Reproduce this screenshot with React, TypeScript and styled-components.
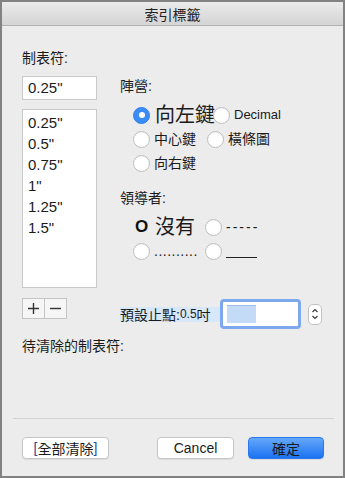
import styled, { createGlobalStyle } from "styled-components";

const Global = createGlobalStyle`
  html, body {
    margin: 0;
    padding: 0;
    background: #ececec;
  }
  * {
    box-sizing: border-box;
  }
`;

const Window = styled.div`
  width: 345px;
  height: 478px;
  border: 2px solid #828282;
  background: #ececec;
  display: flex;
  flex-direction: column;
  font-family: "Liberation Sans", "Noto Sans CJK TC", sans-serif;
  color: #1b1b1b;
`;

const TitleBar = styled.div`
  height: 24px;
  flex-shrink: 0;
  background: linear-gradient(#ebebeb, #d4d4d4);
  border-bottom: 1px solid #b3b3b3;
  display: flex;
  align-items: center;
  justify-content: center;
  font-size: 14px;
  color: #222;
`;

const Content = styled.div`
  flex: 1;
  padding: 0 20px;
  display: flex;
  flex-direction: column;
`;

const Label = styled.div<{ $top?: number }>`
  font-size: 14px;
  line-height: 18px;
  height: 18px;
  margin-top: ${(p) => p.$top ?? 0}px;
  white-space: nowrap;
`;

const Columns = styled.div`
  display: flex;
  gap: 23px;
  margin-top: 9px;
`;

const LeftCol = styled.div`
  width: 75px;
  display: flex;
  flex-direction: column;
`;

const RightCol = styled.div`
  flex: 1;
  display: flex;
  flex-direction: column;
  padding-top: 1px;
`;

const TextBox = styled.div`
  height: 24px;
  background: #fff;
  border: 1px solid #c9c9c9;
  font-size: 15px;
  line-height: 22px;
  padding-left: 5px;
`;

const List = styled.div`
  margin-top: 9px;
  height: 179px;
  background: #fff;
  border: 1px solid #c9c9c9;
  padding: 2px 0 0 5px;
`;

const ListItem = styled.div`
  font-size: 15px;
  line-height: 21px;
  height: 21px;
`;

const PlusMinus = styled.div`
  margin-top: 10px;
  display: flex;
  width: 45px;
  height: 21px;
  border: 1px solid #c4c4c4;
  background: #f6f6f6;
`;

const PmButton = styled.div<{ $divider?: boolean }>`
  flex: 1;
  display: flex;
  align-items: center;
  justify-content: center;
  border-left: ${(p) => (p.$divider ? "1px solid #c4c4c4" : "none")};
`;

const RadioRow = styled.div<{ $top?: number }>`
  display: flex;
  align-items: center;
  height: 24px;
  padding-left: 13px;
  margin-top: ${(p) => p.$top ?? 0}px;
`;

const Option = styled.div<{ $width?: number }>`
  display: flex;
  align-items: center;
  width: ${(p) => (p.$width ? `${p.$width}px` : "auto")};
  flex-shrink: 0;
  white-space: nowrap;
`;

const Radio = styled.span<{ $checked?: boolean }>`
  width: 17px;
  height: 17px;
  border-radius: 50%;
  flex-shrink: 0;
  display: flex;
  align-items: center;
  justify-content: center;
  background: ${(p) => (p.$checked ? "#3a8cf6" : "#fff")};
  border: 1px solid ${(p) => (p.$checked ? "#2f7fec" : "#bdbdbd")};
  box-shadow: ${(p) => (p.$checked ? "none" : "inset 0 1px 1px rgba(0,0,0,0.05)")};
  &::after {
    content: "";
    display: ${(p) => (p.$checked ? "block" : "none")};
    width: 6px;
    height: 6px;
    border-radius: 50%;
    background: #fff;
  }
`;

const OptText = styled.span<{ $size?: number; $spacing?: number }>`
  font-size: ${(p) => p.$size ?? 14}px;
  margin-left: ${(p) => ((p.$size ?? 14) > 16 ? 5 : 4)}px;
  letter-spacing: ${(p) => p.$spacing ?? 0}px;
  line-height: 24px;
`;

const BoldO = styled.span`
  width: 17px;
  display: inline-flex;
  justify-content: center;
  font-size: 17px;
  font-weight: bold;
  line-height: 24px;
  color: #111;
`;

const Underline = styled.span`
  display: inline-block;
  width: 31px;
  height: 14px;
  margin-left: 4px;
  border-bottom: 1px solid #222;
`;

const DefaultRow = styled.div`
  margin-top: 36px;
  height: 30px;
  display: flex;
  align-items: center;
`;

const Highlight = styled.span`
  background: #d7e8fb;
  height: 15px;
  width: 103px;
  margin-right: -3px;
  display: flex;
  align-items: center;
  font-size: 14px;
  white-space: nowrap;
`;

const Small = styled.span`
  font-size: 12px;
`;

const FocusInput = styled.div`
  width: 81px;
  height: 30px;
  border: 3px solid #7ea8ee;
  border-radius: 4px;
  background: #fff;
  display: flex;
  align-items: center;
  padding-left: 4px;
`;

const Selection = styled.div`
  width: 29px;
  height: 18px;
  background: #c4dbf7;
  border-top: 1px solid #9dbde8;
`;

const Stepper = styled.div`
  margin-left: 7px;
  width: 14px;
  height: 21px;
  border: 1px solid #c2c2c2;
  border-radius: 5px;
  background: #fff;
  display: flex;
  align-items: center;
  justify-content: center;
`;

const Separator = styled.div`
  height: 1px;
  background: #d2d2d2;
  margin: 0 9px 0 11px;
`;

const Footer = styled.div`
  display: flex;
  align-items: center;
  justify-content: space-between;
  padding: 18px 19px 17px 20px;
`;

const ButtonGroup = styled.div`
  display: flex;
  gap: 14px;
`;

const Button = styled.div<{ $width: number; $primary?: boolean }>`
  width: ${(p) => p.$width}px;
  height: 22px;
  border-radius: 4px;
  display: flex;
  align-items: center;
  justify-content: center;
  font-size: 14px;
  background: ${(p) => (p.$primary ? "linear-gradient(#65a8fb, #1b72f0)" : "#fff")};
  border: 1px solid ${(p) => (p.$primary ? "#2a78ea" : "#c6c6c6")};
  box-shadow: 0 1px 1px rgba(0, 0, 0, 0.08);
  color: #1b1b1b;
`;

const Bracket = styled.span`
  color: #2b4c9a;
`;

const Spacer = styled.div`
  flex: 1;
`;

const tabs = ['0.25"', '0.5"', '0.75"', '1"', '1.25"', '1.5"'];

export default function App() {
  return (
    <>
      <Global />
      <Window>
        <TitleBar>索引標籤</TitleBar>
        <Content>
          <Label $top={23}>制表符:</Label>
          <Columns>
            <LeftCol>
              <TextBox>0.25"</TextBox>
              <List>
                {tabs.map((t) => (
                  <ListItem key={t}>{t}</ListItem>
                ))}
              </List>
              <PlusMinus>
                <PmButton>
                  <svg width="13" height="13" viewBox="0 0 13 13">
                    <path d="M6.5 1v11M1 6.5h11" stroke="#333" strokeWidth="1.4" />
                  </svg>
                </PmButton>
                <PmButton $divider>
                  <svg width="13" height="13" viewBox="0 0 13 13">
                    <path d="M1 6.5h11" stroke="#333" strokeWidth="1.4" />
                  </svg>
                </PmButton>
              </PlusMinus>
            </LeftCol>
            <RightCol>
              <Label>陣營:</Label>
              <RadioRow $top={8}>
                <Option $width={80}>
                  <Radio $checked />
                  <OptText $size={20}>向左鍵</OptText>
                </Option>
                <Option>
                  <Radio />
                  <OptText $size={13}>Decimal</OptText>
                </Option>
              </RadioRow>
              <RadioRow>
                <Option $width={74}>
                  <Radio />
                  <OptText>中心鍵</OptText>
                </Option>
                <Option>
                  <Radio />
                  <OptText>橫條圖</OptText>
                </Option>
              </RadioRow>
              <RadioRow>
                <Option>
                  <Radio />
                  <OptText>向右鍵</OptText>
                </Option>
              </RadioRow>
              <Label $top={14}>領導者:</Label>
              <RadioRow $top={8}>
                <Option $width={72}>
                  <BoldO>O</BoldO>
                  <OptText $size={20}>沒有</OptText>
                </Option>
                <Option>
                  <Radio />
                  <OptText $spacing={2}>-----</OptText>
                </Option>
              </RadioRow>
              <RadioRow>
                <Option $width={72}>
                  <Radio />
                  <OptText $spacing={0.5}>..........</OptText>
                </Option>
                <Option>
                  <Radio />
                  <Underline />
                </Option>
              </RadioRow>
              <DefaultRow>
                <Highlight>
                  預設止點:<Small>0.5</Small>吋
                </Highlight>
                <FocusInput>
                  <Selection />
                </FocusInput>
                <Stepper>
                  <svg width="8" height="14" viewBox="0 0 8 14">
                    <path d="M1.5 5L4 2.5 6.5 5M1.5 9L4 11.5 6.5 9" fill="none" stroke="#333" strokeWidth="1.1" />
                  </svg>
                </Stepper>
              </DefaultRow>
            </RightCol>
          </Columns>
          <Label $top={8}>待清除的制表符:</Label>
          <Spacer />
        </Content>
        <Separator />
        <Footer>
          <Button $width={87}>
            <Bracket>[</Bracket>全部清除<Bracket>]</Bracket>
          </Button>
          <ButtonGroup>
            <Button $width={77}>Cancel</Button>
            <Button $width={76} $primary>
              確定
            </Button>
          </ButtonGroup>
        </Footer>
      </Window>
    </>
  );
}
